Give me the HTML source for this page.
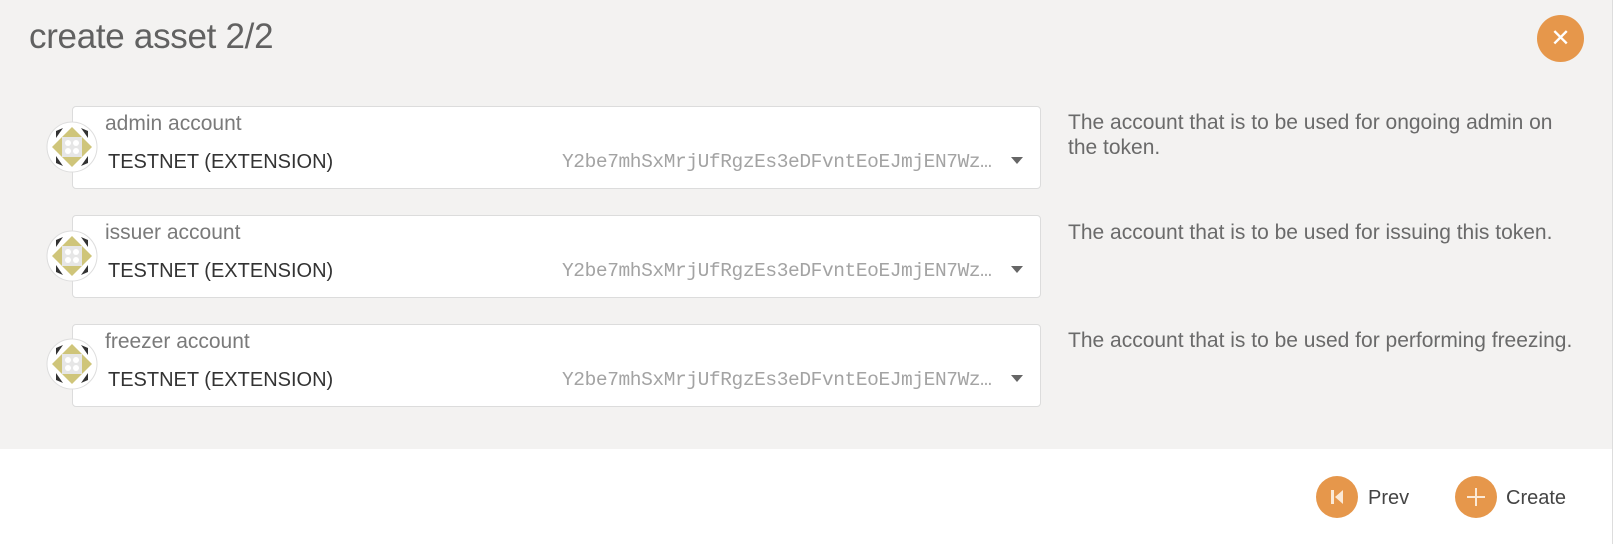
<!DOCTYPE html>
<html><head><style>
*{margin:0;padding:0;box-sizing:border-box}
body{width:1620px;height:544px;background:#fff;font-family:"Liberation Sans",sans-serif;position:relative;overflow:hidden}
.top{position:absolute;left:0;top:0;width:1612px;height:449px;background:#f3f2f1}
.rb{position:absolute;left:1612px;top:0;width:8px;height:544px;background:#fff;border-left:1px solid #ddd}
h1{position:absolute;left:29px;top:17px;font-weight:300;font-size:35px;color:#616161;letter-spacing:-0.3px}
.close{position:absolute;left:1537px;top:15px;width:47px;height:47px;border-radius:50%;background:#e6974b;color:#fff;font-size:24px;text-align:center;line-height:47px}
.box{position:absolute;left:72px;width:969px;height:83px;background:#fff;border:1px solid #dcdcdc;border-radius:4px}
.lbl{position:absolute;left:32px;top:5px;font-size:21px;color:#7a7a7a}
.val{position:absolute;left:35px;top:44px;font-size:20px;color:#333}
.addr{position:absolute;left:489px;top:44px;font-family:"Liberation Mono",monospace;font-size:19.5px;color:#a3a3a3;letter-spacing:-0.4px}
.arr{position:absolute;left:938px;top:50px;width:0;height:0;border-left:6px solid transparent;border-right:6px solid transparent;border-top:7px solid #666}
.desc{position:absolute;left:1068px;font-size:21px;color:#6a6a6a;line-height:25px;width:540px}
.btn{position:absolute;top:476px;width:42px;height:42px;border-radius:50%;background:#e6974b}
.bt{position:absolute;top:487px;font-size:20px;color:#444}
</style></head><body>
<div class="top"></div>
<div class="rb"></div>
<h1>create asset 2/2</h1>
<div class="close">✕</div>

<div class="box" style="top:106px"><div class="lbl">admin account</div><div class="val">TESTNET (EXTENSION)</div><div class="addr">Y2be7mhSxMrjUfRgzEs3eDFvntEoEJmjEN7Wz…</div><div class="arr"></div></div>
<div class="box" style="top:215px"><div class="lbl">issuer account</div><div class="val">TESTNET (EXTENSION)</div><div class="addr">Y2be7mhSxMrjUfRgzEs3eDFvntEoEJmjEN7Wz…</div><div class="arr"></div></div>
<div class="box" style="top:324px"><div class="lbl">freezer account</div><div class="val">TESTNET (EXTENSION)</div><div class="addr">Y2be7mhSxMrjUfRgzEs3eDFvntEoEJmjEN7Wz…</div><div class="arr"></div></div>

<svg style="position:absolute;left:0;top:0" width="200" height="449">
<defs><g id="ic">
<circle cx="0" cy="0" r="25" fill="#fff" stroke="#ddd"/>
<polygon points="0,-20 20,0 0,20 -20,0" fill="#cfc57a"/>
<rect x="-10" y="-10" width="20" height="20" fill="#e6e6e6"/>
<circle cx="-4" cy="-4" r="3" fill="#fff"/><circle cx="4" cy="-4" r="3" fill="#fff"/><circle cx="-4" cy="4" r="3" fill="#fff"/><circle cx="4" cy="4" r="3" fill="#fff"/>
<polygon points="-16,-16 -9,-19 -16,-9" fill="#333"/><polygon points="16,-16 9,-19 16,-9" fill="#333"/>
<polygon points="-16,16 -9,19 -16,9" fill="#333"/><polygon points="16,16 9,19 16,9" fill="#333"/>
</g></defs>
<use href="#ic" x="72" y="147"/><use href="#ic" x="72" y="256"/><use href="#ic" x="72" y="364"/>
</svg>

<div class="desc" style="top:110px">The account that is to be used for ongoing admin on<br>the token.</div>
<div class="desc" style="top:220px">The account that is to be used for issuing this token.</div>
<div class="desc" style="top:328px">The account that is to be used for performing freezing.</div>

<div class="btn" style="left:1316px"><svg width="42" height="42"><rect x="15" y="14" width="3" height="14" fill="#fbe9d6"/><polygon points="19,21 27,14 27,28" fill="#fbe9d6"/></svg></div>
<div class="bt" style="left:1368px">Prev</div>
<div class="btn" style="left:1455px"><svg width="42" height="42"><rect x="20" y="12" width="2" height="18" fill="#fbe9d6"/><rect x="12" y="20" width="18" height="2" fill="#fbe9d6"/></svg></div>
<div class="bt" style="left:1506px">Create</div>
</body></html>
